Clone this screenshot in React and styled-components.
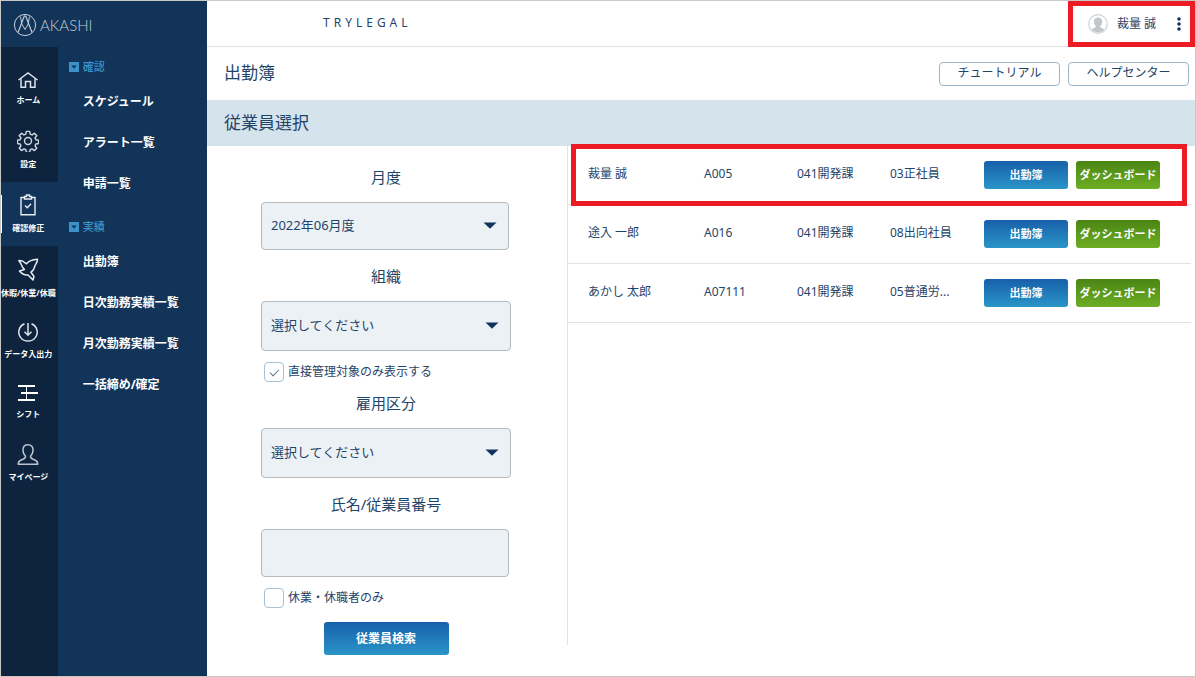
import { useState } from "react";
import styled, { createGlobalStyle } from "styled-components";

const railItems = [
  { label: "ホーム", icon: HomeIcon },
  { label: "設定", icon: GearIcon },
  { label: "確認修正", icon: ClipboardIcon, active: true },
  { label: "休暇/休業/休職", icon: BirdIcon },
  { label: "データ入出力", icon: DataIcon },
  { label: "シフト", icon: ShiftIcon },
  { label: "マイページ", icon: PersonIcon },
];

const menuGroups = [
  { title: "確認", items: ["スケジュール", "アラート一覧", "申請一覧"] },
  { title: "実績", items: ["出勤簿", "日次勤務実績一覧", "月次勤務実績一覧", "一括締め/確定"] },
];

const employees = [
  { name: "裁量 誠", code: "A005", section: "041開発課", type: "03正社員" },
  { name: "途入 一郎", code: "A016", section: "041開発課", type: "08出向社員" },
  { name: "あかし 太郎", code: "A07111", section: "041開発課", type: "05普通労..." },
];

function Logo() {
  return (
    <svg width="24" height="24" viewBox="0 0 24 24" fill="none" stroke="#c3cdd8" strokeWidth="1">
      <circle cx="12" cy="12" r="10.6" />
      <path strokeWidth="1.2" d="M5 19.5 L11.3 3 H12.7 L19 19.5" />
      <path d="M7.5 3.5 L8.8 11 L12 16.5 L15.2 11 L16.5 3.5" />
    </svg>
  );
}

function HomeIcon() {
  return (
    <svg width="22" height="16" viewBox="0 0 22 16" fill="none" stroke="#dde3ea" strokeWidth="1.5">
      <path d="M1.5 8 L11 1 L20.5 8" />
      <path d="M4 6.5 V15.2 H8.500 V9.500 H13.500 V15.2 H18 V6.500" />
    </svg>
  );
}

function GearIcon() {
  return (
    <svg width="22" height="22" viewBox="0 0 24 24" fill="none" stroke="#cfd6df" strokeWidth="1.6" strokeLinejoin="round">
      <circle cx="12" cy="12" r="3.8" />
      <path d="M10.2 1.5h3.6l.6 3 2 .9 2.6-1.8 2.5 2.5-1.8 2.6.9 2 3 .5v3.6l-3 .5-.9 2 1.8 2.6-2.5 2.5-2.6-1.8-2 .9-.6 3h-3.6l-.6-3-2-.9-2.6 1.8-2.5-2.5 1.8-2.6-.9-2-3-.5v-3.6l3-.5.9-2-1.8-2.6 2.5-2.5 2.6 1.8 2-.9z" />
    </svg>
  );
}

function ClipboardIcon() {
  return (
    <svg width="18" height="22" viewBox="0 0 18 22" fill="none" stroke="#e8edf2" strokeWidth="1.4">
      <path d="M5.5 3.5 H2 V20.8 H16 V3.5 H12.5" />
      <path d="M5.5 5 V2.5 H7.5 V1 H10.5 V2.5 H12.5 V5 Z" />
      <path d="M6 11.500 L8.300 13.800 L12 9.800" />
    </svg>
  );
}

function BirdIcon() {
  return (
    <svg width="22" height="23" viewBox="0 0 22 23" fill="none" stroke="#e8edf2" strokeWidth="1.5" strokeLinejoin="round">
      <path d="M1.8 2.5 L5.5 3 L9.5 5.8 C11.5 3 14 1.5 20.5 1.2 C20.7 4.5 18.5 6 17.8 8 C17.5 10 16.5 12.5 14 14.2 L17 18.5 L16 22 L11 17 C7.5 17.5 5 16 2.5 13 L7.5 11.5 C4.5 9 4.5 6 3.5 5 Z" />
    </svg>
  );
}

function DataIcon() {
  return (
    <svg width="22" height="19" viewBox="0 0 22 19" fill="none" stroke="#dde3ea" strokeWidth="1.5">
      <path d="M7.5 0.8 A9.2 9 0 1 0 14.5 0.8" />
      <path d="M11 0 V12 M7.5 8.8 L11 12.2 L14.5 8.8" />
    </svg>
  );
}

function ShiftIcon() {
  return (
    <svg width="22" height="18" viewBox="0 0 22 18" fill="none" stroke="#fff">
      <path strokeWidth="2" d="M1 2 H18 M4 9 H21 M1 16 H18" />
      <path strokeWidth="1" d="M9.5 2 V16" />
    </svg>
  );
}

function PersonIcon() {
  return (
    <svg width="22" height="21" viewBox="0 0 22 21" fill="none" stroke="#b9c2cd" strokeWidth="1.5" strokeLinejoin="round">
      <path d="M11 0.8 C7.5 0.8 6 3 6 6 C6 8.8 7 10.8 8.5 12 C8.8 14.5 7 14.8 4.5 15.8 C2 16.8 1.2 17.8 1.2 20.2 H20.8 C20.8 17.8 20 16.8 17.5 15.8 C15 14.8 13.2 14.5 13.5 12 C15 10.8 16 8.8 16 6 C16 3 14.5 0.8 11 0.8 Z" />
    </svg>
  );
}

function CollapseIcon() {
  return (
    <svg width="10" height="10" viewBox="0 0 10 10">
      <rect width="10" height="10" fill="#3d92cb" />
      <path d="M2.2 3.6 H7.8 L5 6.8 Z" fill="#123458" />
    </svg>
  );
}

function Avatar() {
  return (
    <svg width="20" height="20" viewBox="0 0 20 20">
      <circle cx="10" cy="10" r="9.3" fill="#fff" stroke="#ccd3d8" strokeWidth="1.2" />
      <path d="M10 3.6 C7.2 3.6 5.8 5.5 5.8 7.8 C5.8 10 7 11.3 8 12.2 C8 13.8 4.600 13.500 3.800 16 C7 19.300 13 19.300 16.200 16 C15.400 13.500 12 13.800 12 12.200 C13 11.300 14.200 10 14.200 7.800 C14.200 5.500 12.800 3.600 10 3.600 Z" fill="#bfc7cd" />
    </svg>
  );
}

function SelectBox({ id, value, size }) {
  return (
    <SelectWrap $size={size}>
      <Select id={id} defaultValue={value}>
        <option>{value}</option>
      </Select>
      <svg width="14" height="7" viewBox="0 0 14 7">
        <path d="M0.5 0.5 H13.5 L7 6.8 Z" fill="#12345c" />
      </svg>
    </SelectWrap>
  );
}

function Sidebar() {
  return (
    <Side>
      <Brand href="#">
        <Logo />
        AKASHI
      </Brand>
      <SideBody>
        <Rail>
          {railItems.map(({ label, icon: Icon, active }) => (
            <RailLink href="#" key={label} $active={active}>
              <Icon />
              <span>{label}</span>
            </RailLink>
          ))}
        </Rail>
        <Menu>
          {menuGroups.map(group => (
            <MenuGroup key={group.title}>
              <MenuTitle>
                <CollapseIcon />
                {group.title}
              </MenuTitle>
              {group.items.map(item => <MenuLink href="#" key={item}>{item}</MenuLink>)}
            </MenuGroup>
          ))}
        </Menu>
      </SideBody>
    </Side>
  );
}

function SearchForm() {
  const [direct, setDirect] = useState(true);
  const [absent, setAbsent] = useState(false);

  return (
    <Form onSubmit={event => event.preventDefault()}>
      <Label htmlFor="month">月度</Label>
      <SelectBox id="month" value="2022年06月度" size="small" />
      <Label htmlFor="organization">組織</Label>
      <SelectBox id="organization" value="選択してください" />
      <CheckLabel>
        <Checkbox checked={direct} onChange={() => setDirect(!direct)} />
        直接管理対象のみ表示する
      </CheckLabel>
      <Label htmlFor="employment">雇用区分</Label>
      <SelectBox id="employment" value="選択してください" />
      <Label htmlFor="keyword">氏名/従業員番号</Label>
      <TextInput id="keyword" type="text" />
      <CheckLabel>
        <Checkbox checked={absent} onChange={() => setAbsent(!absent)} />
        休業・休職者のみ
      </CheckLabel>
      <SearchButton type="submit">従業員検索</SearchButton>
    </Form>
  );
}

function EmployeeList() {
  return (
    <List>
      <Table>
        <colgroup>
          <Col $width={136} />
          <Col $width={93} />
          <Col $width={93} />
          <Col $width={94} />
          <col />
        </colgroup>
        <tbody>
          {employees.map(({ name, code, section, type }) => (
            <tr key={code}>
              <Cell>{name}</Cell>
              <Cell>{code}</Cell>
              <Cell>{section}</Cell>
              <Cell>{type}</Cell>
              <Cell>
                <Actions>
                  <ActionButton type="button">出勤簿</ActionButton>
                  <ActionButton type="button" $green>ダッシュボード</ActionButton>
                </Actions>
              </Cell>
            </tr>
          ))}
        </tbody>
      </Table>
      <RowMarker />
    </List>
  );
}

function App() {
  return (
    <Page>
      <GlobalStyle />
      <Sidebar />
      <Main>
        <Header>
          <Company>TRYLEGAL</Company>
          <UserBox>
            <Avatar />
            <span>裁量 誠</span>
            <MoreButton type="button" aria-label="メニュー">
              <svg width="4" height="14" viewBox="0 0 4 14" fill="#12345c">
                <circle cx="2" cy="2" r="1.8" />
                <circle cx="2" cy="7" r="1.8" />
                <circle cx="2" cy="12" r="1.8" />
              </svg>
            </MoreButton>
          </UserBox>
        </Header>
        <TitleBar>
          <Title>出勤簿</Title>
          <HelpButton type="button">チュートリアル</HelpButton>
          <HelpButton type="button">ヘルプセンター</HelpButton>
        </TitleBar>
        <Band>従業員選択</Band>
        <Content>
          <SearchForm />
          <EmployeeList />
        </Content>
      </Main>
    </Page>
  );
}

const GlobalStyle = createGlobalStyle`
  * {
    box-sizing: border-box;
  }
  body {
    margin: 0;
    background: #fff;
    color: #1f4469;
    font-family: "Noto Sans", "Noto Sans CJK JP", sans-serif;
    font-size: 12px;
    line-height: 20px;
  }
  button, input, select {
    font-family: inherit;
    color: inherit;
  }
  a {
    text-decoration: none;
  }
`;

const Page = styled.div`
  display: flex;
  min-height: 100vh;
  border: 1px solid #c8c8c8;
`;

const Side = styled.aside`
  display: flex;
  flex-direction: column;
  flex: 0 0 206px;
  background: #123458;
`;

const Brand = styled.a`
  display: flex;
  align-items: center;
  gap: 3px;
  height: 46px;
  padding: 1px 0 0 12px;
  color: #c3cdd8;
  font-family: Lato, sans-serif;
  font-size: 15px;
  font-weight: 300;
`;

const SideBody = styled.div`
  display: flex;
  flex: 1;
`;

const Rail = styled.nav`
  flex: 0 0 56px;
  padding-top: 13px;
  background: #0d233e;
`;

const RailLink = styled.a`
  display: flex;
  flex-direction: column;
  align-items: center;
  gap: 5px;
  padding: 12px 2px 11px 0;
  overflow: hidden;
  color: #fff;
  font-size: 8px;
  font-weight: 700;
  line-height: 14px;
  white-space: nowrap;
  background: ${props => props.$active
    ? "linear-gradient(#fff, #fff) 0 50% / 1px 38px no-repeat #123458"
    : "none"};
`;

const Menu = styled.nav`
  flex: 1;
  padding-top: 6px;
`;

const MenuGroup = styled.div`
  padding: 0 0 9px 11px;
`;

const MenuTitle = styled.h2`
  display: flex;
  align-items: center;
  gap: 4px;
  margin: 0;
  color: #3d92cb;
  font-size: 11px;
  font-weight: 500;
  line-height: 28px;
`;

const MenuLink = styled.a`
  display: block;
  padding-left: 14px;
  color: #fff;
  font-weight: 700;
  line-height: 41px;
`;

const Main = styled.main`
  flex: 1;
  min-width: 0;
`;

const Header = styled.header`
  display: flex;
  align-items: center;
  justify-content: space-between;
  height: 46px;
  padding-left: 116px;
  box-shadow: inset 0 -1px #dde4e9;
`;

const Company = styled.div`
  padding-bottom: 2px;
  letter-spacing: 4px;
`;

const UserBox = styled.div`
  display: flex;
  align-items: center;
  gap: 9px;
  width: 127px;
  height: 46px;
  padding: 0 9px 0 15px;
  border: 5px solid #ed1c24;
`;

const MoreButton = styled.button`
  display: flex;
  margin-left: auto;
  padding: 0;
  border: 0;
  background: none;
`;

const TitleBar = styled.div`
  display: flex;
  align-items: center;
  gap: 8px;
  height: 53px;
  padding: 0 6px 0 17px;
`;

const Title = styled.h1`
  flex: 1;
  margin: 0;
  padding-bottom: 2px;
  font-size: 17px;
  font-weight: 400;
`;

const HelpButton = styled.button`
  width: 121px;
  height: 24px;
  padding: 0 0 2px;
  border: 1px solid #9ab6c9;
  border-radius: 4px;
  background: #fff;
  font-size: 12px;
  line-height: 20px;
`;

const Band = styled.h2`
  margin: 0;
  padding: 0 17px;
  background: #d5e3ec;
  font-size: 17px;
  font-weight: 400;
  line-height: 46px;
`;

const Content = styled.div`
  display: flex;
  align-items: flex-start;
`;

const Form = styled.form`
  display: flex;
  flex-direction: column;
  flex: 0 0 360px;
  padding: 10px 56px 16px 54px;
`;

const Label = styled.label`
  padding: 10px 0 14px;
  font-size: 15px;
  line-height: 22px;
  text-align: center;
`;

const SelectWrap = styled.div`
  display: grid;
  align-items: center;
  width: ${props => props.$size === "small" ? 248 : 250}px;
  height: ${props => props.$size === "small" ? 48 : 50}px;
  margin-bottom: 5px;

  > * {
    grid-area: 1 / 1;
  }
  svg {
    justify-self: end;
    margin: 0 12px 2px 0;
    pointer-events: none;
  }
`;

const Select = styled.select`
  appearance: none;
  width: 100%;
  height: 100%;
  padding: 0 30px 2px 9px;
  border: 1px solid #b3bbc0;
  border-radius: 4px;
  background: #ebf1f5;
  font-size: 13px;
`;

const TextInput = styled.input`
  width: 248px;
  height: 48px;
  margin-bottom: 5px;
  padding: 0 10px;
  border: 1px solid #b3bbc0;
  border-radius: 4px;
  background: #ebf1f5;
  font-size: 13px;
`;

const CheckLabel = styled.label`
  display: flex;
  align-items: center;
  gap: 4px;
  margin: 6px 0 0 3px;
  line-height: 20px;
`;

const Checkbox = styled.input.attrs({ type: "checkbox" })`
  appearance: none;
  display: grid;
  place-items: center;
  width: 20px;
  height: 20px;
  margin: 0;
  border: 1px solid #a5c3d6;
  border-radius: 4px;
  background: #fff;

  &:checked::before {
    content: "";
    width: 8px;
    height: 4px;
    border: solid #5d7486;
    border-width: 0 0 1px 1px;
    transform: translateY(-1px) rotate(-45deg);
  }
`;

const SearchButton = styled.button`
  align-self: center;
  width: 125px;
  height: 33px;
  margin-top: 14px;
  padding: 0 0 2px;
  border: 0;
  border-radius: 3px;
  background: linear-gradient(#1860aa, #2a95c8);
  color: #fff;
  font-size: 12px;
  font-weight: 700;
`;

const List = styled.section`
  position: relative;
  flex: 1;
  min-width: 0;
  min-height: 499px;
  padding-right: 4px;
  border-left: 1px solid #dde4e9;
`;

const Table = styled.table`
  width: 100%;
  table-layout: fixed;
  border-collapse: separate;
  border-spacing: 0;
`;

const Col = styled.col`
  width: ${props => props.$width}px;
`;

const Cell = styled.td`
  height: 59px;
  padding: 0 0 2px;
  border-bottom: 1px solid #dde4e9;
  white-space: nowrap;

  &:first-child {
    padding-left: 20px;
  }
  &:last-child {
    padding: 0;
  }
`;

const Actions = styled.div`
  display: flex;
  gap: 8px;
`;

const ActionButton = styled.button`
  width: 84px;
  height: 28px;
  padding: 0 0 2px;
  border: 0;
  border-radius: 3px;
  background: ${props => props.$green
    ? "linear-gradient(#4a8514, #6dae24)"
    : "linear-gradient(#1860aa, #2a95c8)"};
  color: #fff;
  font-size: 11px;
  font-weight: 700;
  white-space: nowrap;
`;

const RowMarker = styled.div`
  position: absolute;
  top: -2px;
  left: 3px;
  right: 8px;
  height: 62px;
  border: 5px solid #ed1c24;
  pointer-events: none;
`;

export default App;
